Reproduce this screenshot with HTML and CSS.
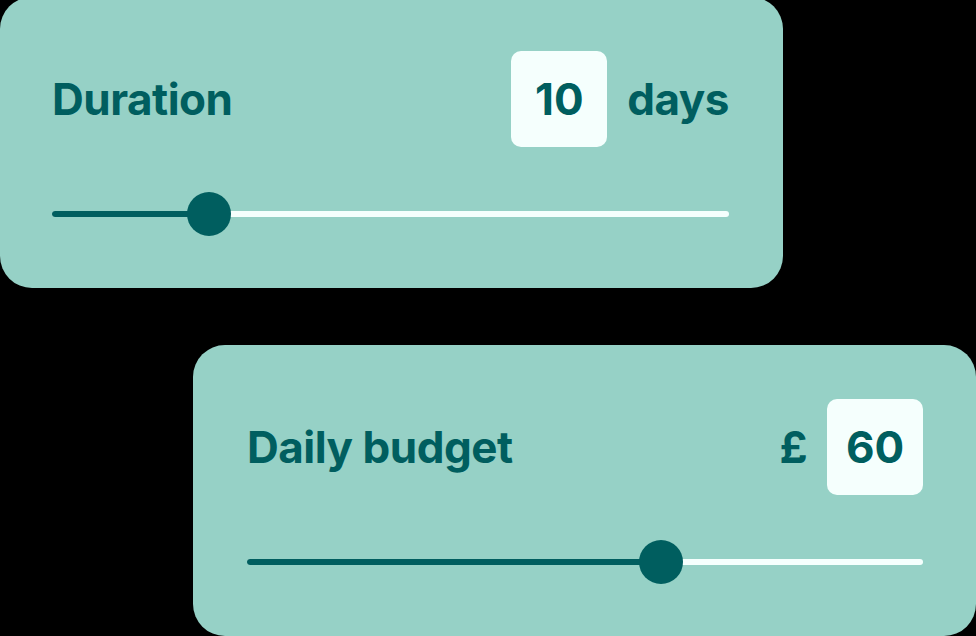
FILE: index.html
```html
<!DOCTYPE html>
<html>
<head>
  <title>Trip planner</title>
  <link rel="stylesheet" href="styles.css">
</head>
<body>
  <div class="card card-duration">
    <div class="row">
      <span class="label">Duration</span>
      <div class="value">
        <span class="box">10</span>
        <span class="unit">days</span>
      </div>
    </div>
    <div class="slider">
      <div class="track"></div>
      <div class="fill" style="width: 23.2%"></div>
      <div class="thumb" style="left: 23.2%"></div>
    </div>
  </div>

  <div class="card card-budget">
    <div class="row">
      <span class="label">Daily budget</span>
      <div class="value">
        <span class="unit">£</span>
        <span class="box">60</span>
      </div>
    </div>
    <div class="slider">
      <div class="track"></div>
      <div class="fill" style="width: 61.2%"></div>
      <div class="thumb" style="left: 61.2%"></div>
    </div>
  </div>
</body>
</html>
```

FILE: styles.css
```css
html, body {
  margin: 0;
  padding: 0;
  background: #000000;
  overflow: hidden;
}
body {
  width: 976px;
  height: 636px;
  font-family: Inter, "Liberation Sans", sans-serif;
  color: #005e5f;
}
.card {
  box-sizing: border-box;
  width: 783px;
  height: 291px;
  background: #96d1c6;
  border-radius: 32px;
  padding: 54px 54px 0 52px;
}
.card-duration {
  margin-top: -3px;
}
.card-budget {
  margin-top: 57px;
  margin-left: 193px;
  padding-left: 54px;
  padding-right: 53px;
}
.row {
  display: flex;
  align-items: center;
  justify-content: space-between;
  height: 96px;
}
.label {
  font-size: 44px;
  font-weight: 700;
  letter-spacing: -0.5px;
}
.value {
  display: flex;
  align-items: center;
  gap: 20px;
}
.box {
  width: 96px;
  height: 96px;
  border-radius: 10px;
  background: #f5fffd;
  display: flex;
  align-items: center;
  justify-content: center;
  font-size: 44px;
  font-weight: 700;
}
.unit {
  font-size: 44px;
  font-weight: 700;
  letter-spacing: -0.5px;
}
.slider {
  position: relative;
  height: 44px;
  margin-top: 45px;
}
.track, .fill {
  position: absolute;
  top: 19px;
  left: 0;
  height: 6px;
  border-radius: 3px;
}
.track {
  right: 0;
  background: #f5fffd;
}
.fill {
  background: #005e5f;
}
.thumb {
  position: absolute;
  top: 0;
  width: 44px;
  height: 44px;
  margin-left: -22px;
  border-radius: 50%;
  background: #005e5f;
}
```
